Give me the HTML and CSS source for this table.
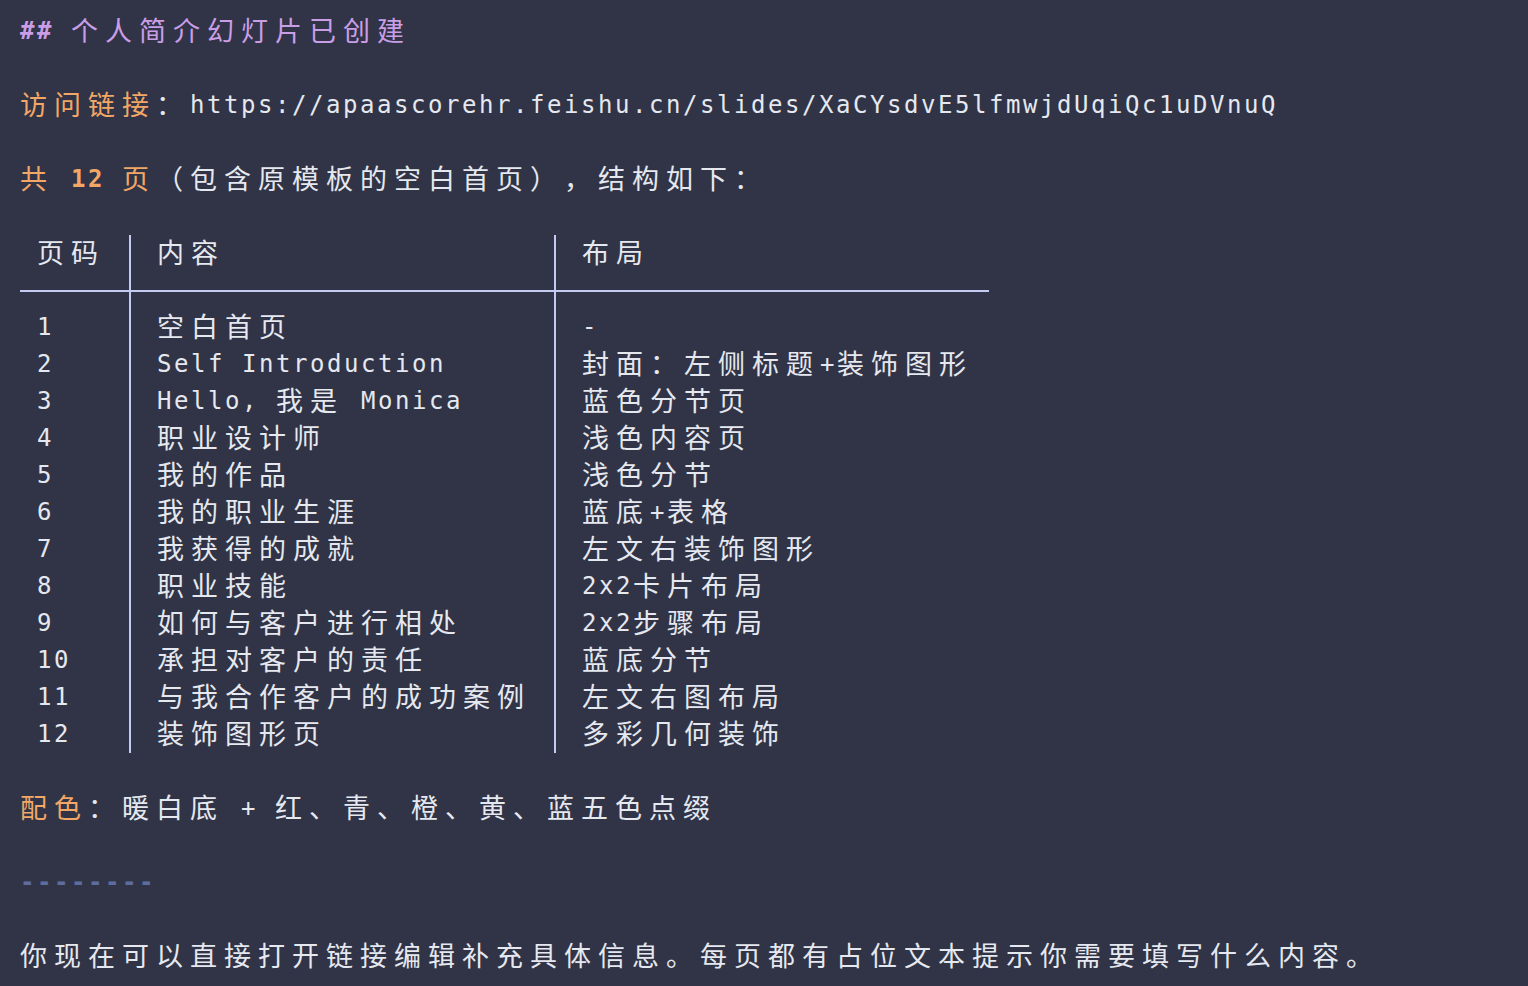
FILE: index.html
```html
<!DOCTYPE html>
<html lang="zh-CN">
<head>
    <meta charset="UTF-8">
    <meta name="viewport" content="width=device-width, initial-scale=1.0">
    <title>个人简介幻灯片</title>
    <link rel="stylesheet" href="styles.css">
</head>
<body>
    <main class="term">
        <div class="ln title"><b>##</b> <span class="z">个人简介幻灯片已创建</span></div>
        <div class="ln"></div>
        <div class="ln"><span class="z key">访问链接</span><span class="z">：</span>https://apaascorehr.feishu.cn/slides/XaCYsdvE5lfmwjdUqiQc1uDVnuQ</div>
        <div class="ln"></div>
        <div class="ln"><span class="z key">共</span> <b class="key">12</b> <span class="z key">页</span><span class="z">（包含原模板的空白首页），结构如下：</span></div>
        <div class="ln"></div>

        <div class="grid">
            <div class="cell c1"><span class="z">页码</span></div><div class="cell c2"><span class="z">内容</span></div><div class="cell c3"><span class="z">布局</span></div>
            <div class="cell c1 sep"></div><div class="cell c2 sep"></div><div class="cell c3 sep"></div>
            <div class="cell c1">1</div><div class="cell c2"><span class="z">空白首页</span></div><div class="cell c3">-</div>
            <div class="cell c1">2</div><div class="cell c2">Self Introduction</div><div class="cell c3"><span class="z">封面：左侧标题</span>+<span class="z">装饰图形</span></div>
            <div class="cell c1">3</div><div class="cell c2">Hello, <span class="z">我是</span> Monica</div><div class="cell c3"><span class="z">蓝色分节页</span></div>
            <div class="cell c1">4</div><div class="cell c2"><span class="z">职业设计师</span></div><div class="cell c3"><span class="z">浅色内容页</span></div>
            <div class="cell c1">5</div><div class="cell c2"><span class="z">我的作品</span></div><div class="cell c3"><span class="z">浅色分节</span></div>
            <div class="cell c1">6</div><div class="cell c2"><span class="z">我的职业生涯</span></div><div class="cell c3"><span class="z">蓝底</span>+<span class="z">表格</span></div>
            <div class="cell c1">7</div><div class="cell c2"><span class="z">我获得的成就</span></div><div class="cell c3"><span class="z">左文右装饰图形</span></div>
            <div class="cell c1">8</div><div class="cell c2"><span class="z">职业技能</span></div><div class="cell c3">2x2<span class="z">卡片布局</span></div>
            <div class="cell c1">9</div><div class="cell c2"><span class="z">如何与客户进行相处</span></div><div class="cell c3">2x2<span class="z">步骤布局</span></div>
            <div class="cell c1">10</div><div class="cell c2"><span class="z">承担对客户的责任</span></div><div class="cell c3"><span class="z">蓝底分节</span></div>
            <div class="cell c1">11</div><div class="cell c2"><span class="z">与我合作客户的成功案例</span></div><div class="cell c3"><span class="z">左文右图布局</span></div>
            <div class="cell c1">12</div><div class="cell c2"><span class="z">装饰图形页</span></div><div class="cell c3"><span class="z">多彩几何装饰</span></div>
        </div>

        <div class="ln"></div>
        <div class="ln"><span class="z key">配色</span><span class="z">：暖白底</span> + <span class="z">红、青、橙、黄、蓝五色点缀</span></div>
        <div class="ln"></div>
        <div class="ln dash">--------</div>
        <div class="ln"></div>
        <div class="ln"><span class="z">你现在可以直接打开链接编辑补充具体信息。每页都有占位文本提示你需要填写什么内容。</span></div>
    </main>
</body>
</html>
```

FILE: styles.css
```css
* {
    margin: 0;
    padding: 0;
    box-sizing: border-box;
}
body {
    min-height: 100vh;
    background-color: #303446;
    color: #e6e8f0;
    font-family: "DejaVu Sans Mono", "Noto Sans CJK SC", monospace;
    font-size: 24px;
    letter-spacing: 2.55px;
    line-height: 37px;
    text-spacing-trim: space-all;
}
.term {
    padding: 13px 20px;
}
.ln {
    height: 37px;
    white-space: pre;
}
/* wide glyphs take two cells (34px) */
.z {
    font-family: "Noto Sans CJK SC", sans-serif;
    font-size: 27px;
    letter-spacing: 7px;
    line-height: 0;
    position: relative;
    top: 2px;
}
.title {
    color: #ca9ee6;
}
.key {
    color: #f2a766;
}
b {
    font-weight: bold;
}
.dash {
    color: #5f6c9e;
    font-weight: bold;
}
.grid {
    display: grid;
    grid-template-columns: 109px 425px 435px;
    grid-auto-rows: 37px;
    width: 969px;
}
.cell {
    white-space: pre;
    overflow: visible;
}
.c1 {
    padding-left: 17px;
}
.c2,
.c3 {
    border-left: 2px solid #c3cbf2;
    padding-left: 26px;
}
.sep {
    background: linear-gradient(#c3cbf2, #c3cbf2) center / 100% 2px no-repeat;
}
```
